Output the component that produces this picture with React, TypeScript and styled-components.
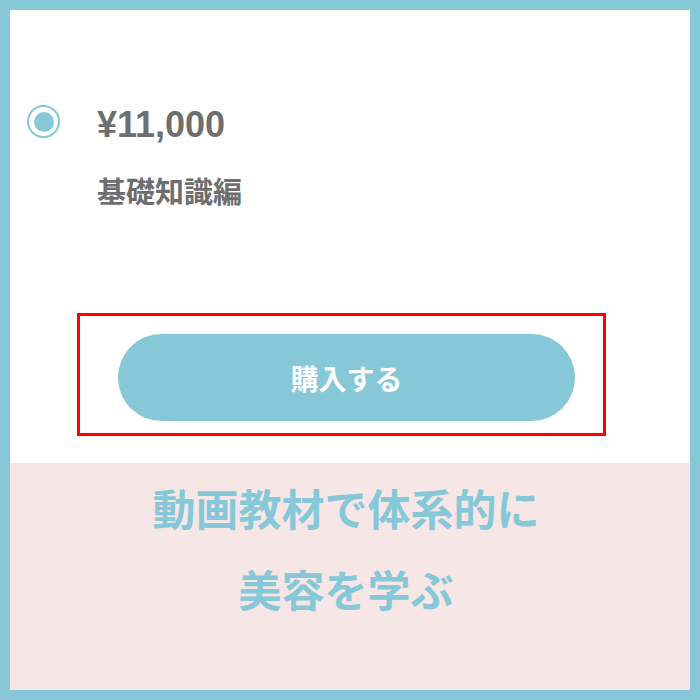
import React from "react";
import styled, { createGlobalStyle } from "styled-components";

const Global = createGlobalStyle`
  html, body { margin: 0; padding: 0; background: #ffffff; }
  * { box-sizing: border-box; }
`;

const Frame = styled.div`
  width: 700px;
  height: 700px;
  border: 10px solid #86c8d8;
  display: flex;
  flex-direction: column;
  background: #ffffff;
  font-family: "Noto Sans CJK JP", "Noto Sans", sans-serif;
`;

const TopSection = styled.section`
  height: 453px;
  display: flex;
  flex-direction: column;
  padding-top: 95px;
`;

const OptionHead = styled.div`
  display: flex;
  align-items: flex-start;
  padding-left: 17px;
  gap: 37px;
`;

const Radio = styled.span`
  width: 33px;
  height: 33px;
  border-radius: 50%;
  border: 2px solid #86c8d8;
  display: flex;
  align-items: center;
  justify-content: center;
  flex-shrink: 0;
  &::after {
    content: "";
    width: 20px;
    height: 20px;
    border-radius: 50%;
    background: #86c8d8;
  }
`;

const Price = styled.div`
  margin-top: 2px;
  font-family: "Liberation Sans", Arial, sans-serif;
  font-weight: 700;
  font-size: 36px;
  line-height: 36px;
  color: #6e6e6e;
`;

const PlanName = styled.div`
  margin-top: 33px;
  padding-left: 87px;
  font-weight: 700;
  font-size: 29px;
  line-height: 29px;
  color: #6e6e6e;
`;

const Highlight = styled.div`
  margin-top: 108px;
  margin-left: 67px;
  width: 529px;
  height: 123px;
  border: 3px solid #ff0000;
  padding: 18px 28px 12px 38px;
`;

const BuyButton = styled.button`
  width: 100%;
  height: 100%;
  border: none;
  border-radius: 44px;
  background: #86c8d8;
  color: #ffffff;
  font-family: "Noto Sans CJK JP", "Noto Sans", sans-serif;
  font-weight: 700;
  font-size: 28px;
  padding: 0;
  cursor: pointer;
`;

const Banner = styled.section`
  flex: 1;
  background: #f7e6e6;
  display: flex;
  flex-direction: column;
  align-items: center;
  padding-top: 4px;
  padding-right: 8px;
`;

const BannerLine = styled.div`
  font-weight: 700;
  font-size: 43px;
  line-height: 81px;
  color: #86c8d8;
`;

export default function App() {
  return (
    <>
      <Global />
      <Frame>
        <TopSection>
          <OptionHead>
            <Radio />
            <Price>¥11,000</Price>
          </OptionHead>
          <PlanName>基礎知識編</PlanName>
          <Highlight>
            <BuyButton>購入する</BuyButton>
          </Highlight>
        </TopSection>
        <Banner>
          <BannerLine>動画教材で体系的に</BannerLine>
          <BannerLine>美容を学ぶ</BannerLine>
        </Banner>
      </Frame>
    </>
  );
}
